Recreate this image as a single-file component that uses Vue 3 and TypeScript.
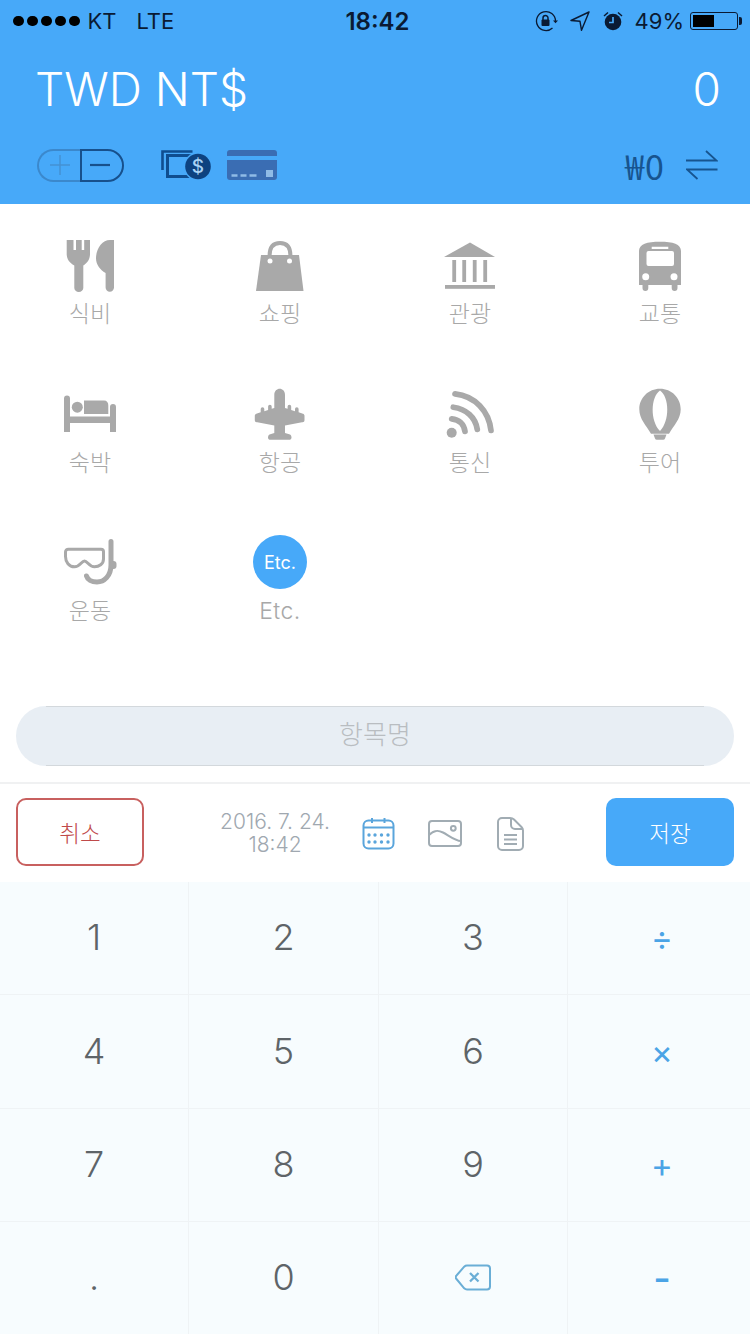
<template>
  <div class="screen">
    <header class="top">
      <div class="status">
        <div class="status-left">
          <span class="dots"><i v-for="n in 5" :key="n"></i></span>
          <span class="carrier">KT</span>
          <span class="net">LTE</span>
        </div>
        <div class="clock">18:42</div>
        <div class="status-right">
          <svg width="24" height="22" viewBox="0 0 24 22" fill="none" stroke="#0a1a33" stroke-width="1.3">
            <path d="M20.5 11a9.5 9.5 0 1 0-3 7" />
            <path d="M18 10.5h5l-2.500 2.800z" fill="#0a1a33" stroke="none" />
            <rect x="6.500" y="9.500" width="8" height="6.500" rx="1" fill="#0a1a33" stroke="none" />
            <path d="M8 10V8a2.500 2.500 0 0 1 5 0v2" stroke-width="1.500" />
          </svg>
          <svg class="st-arrow" width="20" height="20" viewBox="0 0 20 20" fill="none" stroke="#0a1a33" stroke-width="1.400" stroke-linejoin="round">
            <path d="M19 1 1 9.500l9 .8 1.500 9z" />
          </svg>
          <svg class="st-alarm" width="20" height="20" viewBox="0 0 20 20">
            <circle cx="10" cy="11" r="8.300" fill="#0a1a33" />
            <path d="M10 6v5.500H6" fill="none" stroke="#47a9f9" stroke-width="1.700" />
            <path d="M1 5 5 1.500M19 5l-4-3.500" stroke="#0a1a33" stroke-width="1.500" />
          </svg>
          <span class="pct">49%</span>
          <span class="battery"><span class="battery-fill"></span></span>
          <span class="battery-nub"></span>
        </div>
      </div>

      <div class="amount-row">
        <div class="currency">TWD NT$</div>
        <div class="amount">0</div>
      </div>

      <div class="tools">
        <div class="pill">
          <span class="pill-plus">
            <svg width="20" height="20" viewBox="0 0 20 20" stroke="#4491d3" stroke-width="1.500"><path d="M10 0v20M0 10h20" /></svg>
          </span>
          <span class="pill-minus">
            <svg width="20" height="4" viewBox="0 0 20 4" stroke="#17508c" stroke-width="2.200"><path d="M0 2h20" /></svg>
          </span>
        </div>
        <svg class="cash" width="50" height="30" viewBox="0 0 50 30">
          <path d="M1.500 20V1.500h30" fill="none" stroke="#0f4d8f" stroke-width="2.600" />
          <path d="M6.500 28V5.500h27M6.500 26.500h22" fill="none" stroke="#0f4d8f" stroke-width="3" />
          <circle cx="37" cy="16.500" r="14.300" fill="#47a9f9" />
          <circle cx="37" cy="16.500" r="12.800" fill="#0d4280" />
          <text x="37" y="23" text-anchor="middle" class="cash-sign">$</text>
        </svg>
        <svg class="card" width="50" height="30" viewBox="0 0 50 30">
          <path d="M3 0h44a3 3 0 0 1 3 3v3H0V3a3 3 0 0 1 3-3z" fill="#3a6db3" />
          <path d="M0 10h50v17a3 3 0 0 1-3 3H3a3 3 0 0 1-3-3z" fill="#3a6db3" />
          <rect x="39" y="20" width="7" height="7" fill="#8fbbe6" />
          <path d="M4.500 25.500h6M13.500 25.500h6M22.500 25.500h7" stroke="#8fbbe6" stroke-width="2.600" />
        </svg>
        <div class="won">₩0</div>
        <svg class="swap" width="32" height="30" viewBox="0 0 32 30" fill="none" stroke="#17548f" stroke-width="1.800">
          <path d="M0 10.500h30.500L20 1M31.500 19.500H1L11.500 29" />
        </svg>
      </div>
    </header>

    <section class="cats">
      <div v-for="c in categories" :key="c.key" class="cat">
        <div v-if="c.key === 'etc'" class="etc-badge">Etc.</div>
        <svg v-else class="cat-icon" width="60" height="56" viewBox="0 0 60 56" fill="#a9a9a9">
          <g v-if="c.key === 'food'">
            <path d="M6.700 2h6.800v10h2.500V2h5.700v10h2.500V2H30v14c0 5-2.500 9-6.700 11.500V50a4.500 4 0 0 1-9 0V27.500C9.500 25 6.700 21 6.700 16z" />
            <path d="M50 2h4v47.500a4.200 4.200 0 0 1-8.400 0V35C40 32 36 26.500 36 20.300 36 11 42 2 50 2z" />
          </g>
          <g v-else-if="c.key === 'shop'">
            <path d="M11 17h38l4.500 36H6z" />
            <path d="M19.500 18c0-9 4-13 10.500-13s10.500 4 10.500 13" fill="none" stroke="#a9a9a9" stroke-width="4" />
            <circle cx="20" cy="23" r="2.500" fill="#fff" />
            <circle cx="39.500" cy="23" r="2.500" fill="#fff" />
          </g>
          <g v-else-if="c.key === 'sight'">
            <path d="M30 4.500 55 19H4z" />
            <rect x="12.300" y="22" width="3.800" height="22" />
            <rect x="22.300" y="22" width="3.800" height="22" />
            <rect x="32.800" y="22" width="3.800" height="22" />
            <rect x="43.300" y="22" width="3.800" height="22" />
            <rect x="5" y="47" width="50" height="3.800" />
          </g>
          <g v-else-if="c.key === 'bus'">
            <path fill-rule="evenodd" d="M9 13C9 6 17 3.700 30 3.700S51 6 51 13v34h-3.500v3a2.900 2.900 0 0 1-5.800 0v-3H18.300v3a2.900 2.900 0 0 1-5.800 0v-3H9zM18.500 13a2 2 0 0 0-2 2v11a2 2 0 0 0 2 2h23.500a2 2 0 0 0 2-2V15a2 2 0 0 0-2-2zM21.700 8.700V11h16.600V8.700z" />
            <circle cx="15.700" cy="38.700" r="3.500" fill="#fff" />
            <circle cx="44" cy="38.700" r="3.500" fill="#fff" />
          </g>
          <g v-else-if="c.key === 'bed'">
            <path d="M4 11.500a3 3 0 0 1 6 0V29.500h40V20a3 3 0 0 1 6 0v25h-6v-9H10v9H4z" />
            <circle cx="17.300" cy="20.200" r="5.500" />
            <path d="M24 13.500h20c3 0 4.300 2 4.300 5V27H24z" />
          </g>
          <g v-else-if="c.key === 'plane'">
            <path d="M24.300 8C24.300 4 27 1.800 29.700 1.800S35 4 35 8V21L37.600 21.800V19.500a1.800 1.800 0 0 1 3.600 0V23L45 24.200V22a1.800 1.800 0 0 1 3.600 0V25.300L53 26.700C54 27 54.500 28 54.500 29V33C54.500 34.700 53.500 35.500 52 35.200L35 38.500V46l5 1.500C41 48 41.500 49.500 41.500 50.500 41.500 52 40.500 52.800 39 52.800H20.500C19 52.800 18 52 18 50.500 18 49.500 18.500 48 19.500 47.500L24.300 46V38.500L7.300 35.200C5.800 35.500 4.800 34.700 4.800 33V29C4.800 28 5.300 27 6.300 26.700L10.700 25.300V22a1.800 1.800 0 0 1 3.600 0V24.200L18.100 23V19.500a1.800 1.800 0 0 1 3.600 0V21.800L24.300 21z" />
          </g>
          <g v-else-if="c.key === 'net'">
            <circle cx="11.700" cy="45.800" r="5" />
            <path d="M15 6.800C35 9 49 24 51 43.500M13.300 20.200C26 22 35.500 30 37.300 42.500M11.700 31.800C19 32.500 24 37 25 44.500" fill="none" stroke="#a9a9a9" stroke-width="5.700" stroke-linecap="round" />
          </g>
          <g v-else-if="c.key === 'tour'">
            <path fill-rule="evenodd" d="M30 1.800c11.500 0 20.700 9 20.700 20.500 0 10-7 16-11.700 24.500h-18C16.300 38.300 9.300 32.300 9.300 22.300 9.300 10.800 18.500 1.800 30 1.800zM30 3.500C20.500 10 20 34 30 44 40 34 39.500 10 30 3.500z" />
            <path d="M23.500 47.500h13l-1.500 4a2 2 0 0 1-2 1.300h-6a2 2 0 0 1-2-1.300z" />
          </g>
          <g v-else-if="c.key === 'sport'">
            <path d="M8.500 14.200H41a2.500 2.500 0 0 1 2.500 2.500V24C43.500 29 39 31.800 34.500 31.800 29 31.800 27.500 26 24.500 26 21.500 26 20 31.800 14.500 31.800 9 31.800 5.500 27 5.500 21.500V17a2.800 2.800 0 0 1 3-2.800z" fill="none" stroke="#a9a9a9" stroke-width="3" />
            <path d="M51 6.500V30C51 41 44 47 37 47 31.500 47 27.500 44.500 26.500 41" fill="none" stroke="#a9a9a9" stroke-width="5" stroke-linecap="round" />
            <rect x="50" y="26" width="6.500" height="8" rx="3" />
          </g>
        </svg>
        <div class="cat-label" :class="{ latin: c.key === 'etc' }">{{ c.label }}</div>
      </div>
    </section>

    <div class="name-wrap">
      <div class="name-field">항목명</div>
    </div>

    <div class="actions">
      <button class="btn cancel">취소</button>
      <div class="meta">
        <div class="date">2016. 7. 24.<br />18:42</div>
        <svg width="33" height="32" viewBox="0 0 33 32" fill="none" stroke="#5aa5dc" stroke-width="2">
          <rect x="1.500" y="2.500" width="30" height="28" rx="5" />
          <path d="M1.500 9.500h30M10 0v5M22.500 0v5" />
          <g fill="#5aa5dc" stroke="none">
            <circle cx="7" cy="17" r="1.700" /><circle cx="13" cy="17" r="1.700" /><circle cx="19.500" cy="17" r="1.700" /><circle cx="26" cy="17" r="1.700" />
            <circle cx="7" cy="24" r="1.700" /><circle cx="13" cy="24" r="1.700" /><circle cx="19.500" cy="24" r="1.700" /><circle cx="26" cy="24" r="1.700" />
          </g>
        </svg>
        <svg width="34" height="27" viewBox="0 0 34 27" fill="none" stroke="#a1acb3" stroke-width="2">
          <rect x="1" y="1" width="32" height="25" rx="3" />
          <path d="M1 15c5-5 9-5 14-2.500S27 21 33 21" />
          <circle cx="25.300" cy="8.300" r="2.400" />
        </svg>
        <svg class="doc" width="27" height="34" viewBox="0 0 27 34" fill="none" stroke="#a1acb3" stroke-width="2">
          <path d="M5 1h8c1.500 0 3 .5 4 1.500l7.500 7.500c1 1 1.500 2 1.500 3.500V29a4 4 0 0 1-4 4H5a4 4 0 0 1-4-4V5a4 4 0 0 1 4-4z" />
          <path d="M14 2v6a4 4 0 0 0 4 4h7.500M7 18h13M7 22.500h13M7 27h13" />
        </svg>
      </div>
      <button class="btn save">저장</button>
    </div>

    <div class="keypad">
      <div
        v-for="k in keys"
        :key="k.label"
        class="key"
        :class="{ op: k.op, minus: k.label === '-' }"
      >
        <svg v-if="k.label === 'del'" width="36" height="27" viewBox="0 0 36 27" fill="none" stroke="#6aaed6" stroke-width="2">
          <path d="M12 1.500h20a3 3 0 0 1 3 3v18a3 3 0 0 1-3 3H12c-1 0-2-.4-2.800-1.200L1.500 15a2.500 2.500 0 0 1 0-3.500L9.200 2.700C10 1.900 11 1.500 12 1.500z" />
          <path d="M15 9l8.500 8.500M23.500 9 15 17.500" stroke-width="2.300" />
        </svg>
        <template v-else>{{ k.label }}</template>
      </div>
    </div>
  </div>
</template>

<script setup lang="ts">
interface Category {
  key: string
  label: string
}

interface Key {
  label: string
  op?: boolean
}

const categories: Category[] = [
  { key: 'food', label: '식비' },
  { key: 'shop', label: '쇼핑' },
  { key: 'sight', label: '관광' },
  { key: 'bus', label: '교통' },
  { key: 'bed', label: '숙박' },
  { key: 'plane', label: '항공' },
  { key: 'net', label: '통신' },
  { key: 'tour', label: '투어' },
  { key: 'sport', label: '운동' },
  { key: 'etc', label: 'Etc.' }
];

const keys: Key[] = [
  { label: '1' }, { label: '2' }, { label: '3' }, { label: '÷', op: true },
  { label: '4' }, { label: '5' }, { label: '6' }, { label: '×', op: true },
  { label: '7' }, { label: '8' }, { label: '9' }, { label: '+', op: true },
  { label: '.' }, { label: '0' }, { label: 'del' }, { label: '-', op: true }
];
</script>

<style scoped>
.screen {
  width: 750px;
  height: 1334px;
  overflow: hidden;
  background: #fff;
  font-family: Inter, "Noto Sans CJK KR", sans-serif;
}

.top {
  height: 204px;
  background: #47a9f9;
  box-sizing: border-box;
}

.status {
  height: 42px;
  padding: 0 8px 0 13px;
  display: grid;
  grid-template-columns: 1fr auto 1fr;
  align-items: center;
  color: #0a1a33;
  font-size: 22px;
}

.status-left {
  display: flex;
  align-items: center;
}

.dots {
  display: flex;
  gap: 3.500px;
  margin-right: 8px;
}

.dots i {
  width: 10.500px;
  height: 10.500px;
  border-radius: 50%;
  background: #000;
}

.net {
  margin-left: 20px;
}

.clock {
  font-weight: 600;
  font-size: 24px;
}

.status-right {
  display: flex;
  align-items: center;
  justify-content: flex-end;
}

.st-arrow {
  margin-left: 11px;
}

.st-alarm {
  margin-left: 13px;
}

.pct {
  margin-left: 12px;
}

.battery {
  margin-left: 6px;
  width: 48px;
  height: 18px;
  box-sizing: border-box;
  border: 1.500px solid #0a1a33;
  border-radius: 3px;
  padding: 2px;
  display: flex;
}

.battery-fill {
  width: 21px;
  background: #000;
}

.battery-nub {
  width: 3px;
  height: 8px;
  margin-left: 1px;
  background: #0a1a33;
  border-radius: 0 2px 2px 0;
}

.amount-row {
  display: flex;
  justify-content: space-between;
  align-items: center;
  padding: 0 29px 0 35px;
  height: 94px;
  color: #fff;
  font-weight: 300;
  font-size: 46px;
}

.tools {
  display: flex;
  align-items: center;
  padding: 0 32px 0 37px;
  height: 58px;
}

.pill {
  width: 87px;
  height: 33px;
  display: flex;
  box-sizing: border-box;
}

.pill-plus,
.pill-minus {
  display: flex;
  align-items: center;
  justify-content: center;
  box-sizing: border-box;
  border: 2px solid #17508c;
}

.pill-plus {
  width: 43px;
  border-color: #3b88cc;
  border-right: 0;
  border-radius: 17px 0 0 17px;
}

.pill-minus {
  width: 44px;
  border-radius: 0 17px 17px 0;
  padding-right: 4px;
}

.cash {
  margin-left: 37px;
}

.cash-sign {
  font-size: 19px;
  font-weight: 500;
  fill: #a9d2f5;
}

.card {
  margin-left: 16px;
}

.won {
  margin-left: auto;
  color: #17548f;
  font-family: "Noto Sans CJK KR", sans-serif;
  font-size: 34px;
  font-weight: 400;
  letter-spacing: 1px;
}

.swap {
  margin-left: 21px;
}

.cats {
  height: 502px;
  box-sizing: border-box;
  padding-top: 34px;
  display: grid;
  grid-template-columns: repeat(4, 190px);
  grid-auto-rows: 148.500px;
  justify-content: center;
}

.cat {
  display: flex;
  flex-direction: column;
  align-items: center;
}

.cat-icon {
  display: block;
}

.etc-badge {
  width: 54px;
  height: 54px;
  margin-bottom: 2px;
  border-radius: 50%;
  background: #47a9f9;
  color: #fff;
  font-size: 18px;
  display: flex;
  align-items: center;
  justify-content: center;
}

.cat-label {
  margin-top: 8px;
  height: 24px;
  line-height: 24px;
  font-size: 23px;
  font-weight: 300;
  color: #a8a8a8;
}

.cat-label.latin {
  font-size: 23px;
  letter-spacing: 0.5px;
}

.name-wrap {
  height: 76px;
  padding: 0 16px;
  border-bottom: 2px solid #f0f1f2;
}

.name-field {
  height: 60px;
  border-radius: 30px;
  background-color: #e8eef4;
  background-image: linear-gradient(#d3d8dc, #d3d8dc), linear-gradient(#d3d8dc, #d3d8dc);
  background-size: calc(100% - 60px) 1px;
  background-position: center top, center bottom;
  background-repeat: no-repeat;
  color: #b9bdc1;
  font-size: 26px;
  font-weight: 300;
  text-align: center;
  line-height: 58px;
}

.actions {
  height: 98px;
  padding: 14px 16px 16px;
  box-sizing: border-box;
  display: flex;
  align-items: stretch;
}

.btn {
  width: 128px;
  border-radius: 10px;
  font-family: inherit;
  font-size: 22.500px;
  font-weight: 300;
  padding: 0;
}

.cancel {
  background: #fff;
  border: 2px solid #c8605f;
  color: #bf4a4a;
}

.save {
  background: #47a9f9;
  border: 0;
  color: #fff;
}

.meta {
  flex: 1;
  display: flex;
  align-items: center;
  padding: 3px 0 0 76px;
}

.date {
  width: 110px;
  text-align: center;
  font-size: 21px;
  font-weight: 300;
  line-height: 23px;
  color: #a0a8b0;
  margin: -1px 32px 0 0;
  white-space: nowrap;
}

.meta svg + svg {
  margin-left: 33px;
}

.meta .doc {
  margin-left: 35px;
}

.keypad {
  display: grid;
  grid-template-columns: 189px 190px 189px 182px;
  grid-auto-rows: 113.400px;
  background: #f7fcfe;
}

.key {
  box-sizing: border-box;
  display: flex;
  align-items: center;
  justify-content: center;
  padding-bottom: 2px;
  border-right: 1px solid #eff3f5;
  border-bottom: 1px solid #eff3f5;
  font-size: 36px;
  font-weight: 300;
  color: #5e6468;
}

.key:nth-child(4n) {
  border-right: 0;
}

.key.op {
  color: #4ba4e6;
  font-size: 33px;
  font-weight: 400;
  padding: 0 0 0 6px;
}

.key.op.minus {
  font-size: 38px;
  font-weight: 500;
}
</style>
